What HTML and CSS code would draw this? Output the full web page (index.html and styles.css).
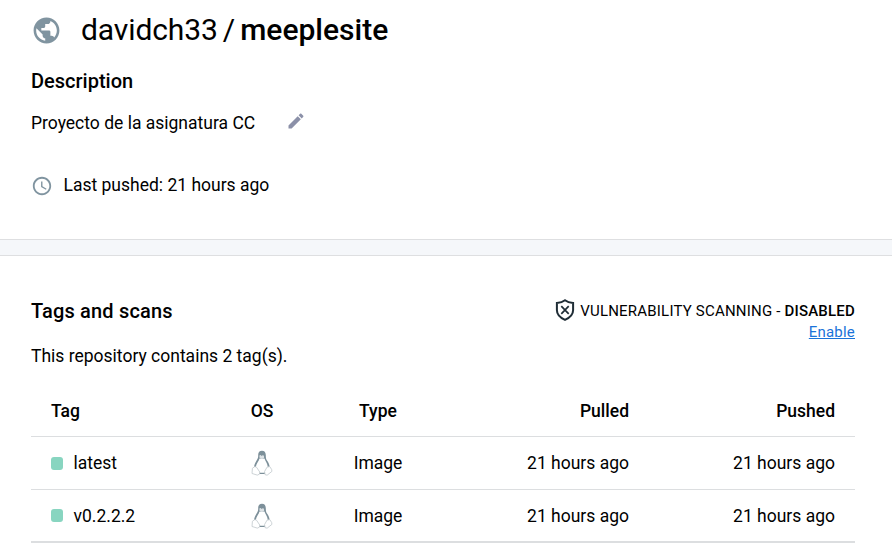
FILE: index.html
```html
<!DOCTYPE html>
<html lang="en">
<head>
<meta charset="utf-8">
<title>davidch33/meeplesite</title>
<link rel="stylesheet" href="styles.css">
</head>
<body>
<svg width="0" height="0" class="sprite">
  <symbol id="tux" viewBox="0 0 22 26">
    <path d="M11 .7C8.600.7 7.100 2.300 7.200 4.800c.1 3-.3 3.600-1.900 6.200C3.900 13.300 3 15.500 3 18l4.600 6h7l4.200-6c-.1-2.800-1.200-5.200-2.600-7.200-1.400-1.900-1.300-3.200-1.400-5.900C14.700 2.200 13.400.7 11 .7z" fill="#7d909a"/>
    <path d="M8.500 8.500c-.5 2.600-3.500 5.500-3.700 8.700l4 5.600h4.700l3.300-5.700c-.1-3.600-2.500-5.800-3.300-8.600z" fill="#fff"/>
    <path d="M8.400 5.600c.8-1 1.500-.5 2.200.3.800-.9 1.700-1 2.400-.1l.1 1.900-2.200 1.300-2.400-1.200z" fill="#dde2e5"/>
    <path d="M1.400 18.300l2.500-1.800 1.700.8 3.200 4.800-.4 2.100-2.100.9-5.300-1.600zM20.700 19.600l-1.900-3-2.700.5-2.500 4.300.4 3.200 2.100.6 4.800-3.800z" fill="#fff" stroke="#c0c8cc" stroke-width=".8"/>
  </symbol>
</svg>
<section class="overview">
  <h1 class="title">
    <svg class="globe" viewBox="0 0 24 24"><path d="M12 2C6.480 2 2 6.480 2 12s4.480 10 10 10 10-4.480 10-10S17.520 2 12 2zm-1 17.930c-3.950-.49-7-3.850-7-7.930 0-.62.08-1.210.21-1.790L9 15v1c0 1.100.9 2 2 2v1.930zm6.900-2.540c-.26-.81-1-1.390-1.900-1.390h-1v-3c0-.55-.45-1-1-1H8v-2h2c.55 0 1-.45 1-1V7h2c1.100 0 2-.9 2-2v-.41c2.930 1.190 5 4.060 5 7.410 0 2.080-.8 3.970-2.100 5.390z"/></svg>
    <span class="owner">davidch33</span><span class="slash">/</span><span class="repo">meeplesite</span>
  </h1>
  <h2 class="heading">Description</h2>
  <div class="description">
    <span>Proyecto de la asignatura CC</span>
    <svg class="pencil" viewBox="0 0 24 24"><path d="M3 17.250V21h3.750L17.810 9.940l-3.750-3.750L3 17.250zM20.710 7.040c.39-.39.39-1.020 0-1.410l-2.340-2.340c-.39-.39-1.020-.39-1.410 0l-1.830 1.830 3.750 3.750 1.830-1.830z"/></svg>
  </div>
  <div class="pushed">
    <svg class="clock" viewBox="0 0 24 24"><path d="M11.990 2C6.470 2 2 6.480 2 12s4.470 10 9.990 10C17.520 22 22 17.520 22 12S17.520 2 11.990 2zM12 20c-4.420 0-8-3.580-8-8s3.580-8 8-8 8 3.580 8 8-3.580 8-8 8zm.5-13H11v6l5.250 3.150.75-1.230-4.500-2.670z"/></svg>
    <span>Last pushed: 21 hours ago</span>
  </div>
</section>
<div class="divider"></div>
<section class="tags">
  <header class="tags-head">
    <div>
      <h2 class="heading">Tags and scans</h2>
      <p class="count">This repository contains 2 tag(s).</p>
    </div>
    <div class="scan">
      <div class="scan-status">
        <svg class="shield" viewBox="0 0 20 22"><path d="M10 1.300C7.800 3 5.200 3.700 1.900 3.900v7.300c0 4.100 3.200 7.400 8.100 9.600 4.900-2.200 8.100-5.500 8.100-9.600V3.900C14.800 3.700 12.200 3 10 1.300z"/><path class="cross" d="M6.300 7.200l7.400 7.600M13.700 7.200l-7.400 7.600"/></svg>
        <span>VULNERABILITY SCANNING - <b>DISABLED</b></span>
      </div>
      <a class="enable" href="#">Enable</a>
    </div>
  </header>
  <table class="table">
    <colgroup><col class="c1"><col class="c2"><col class="c3"><col class="c4"><col class="c5"></colgroup>
    <thead>
      <tr><th>Tag</th><th class="mid">OS</th><th class="mid">Type</th><th class="end">Pulled</th><th class="end">Pushed</th></tr>
    </thead>
    <tbody>
      <tr>
        <td><div class="tag"><i class="dot"></i>latest</div></td>
        <td class="mid"><svg class="tux"><use href="#tux"/></svg></td>
        <td class="mid">Image</td><td class="end">21 hours ago</td><td class="end">21 hours ago</td>
      </tr>
      <tr class="last">
        <td><div class="tag"><i class="dot"></i>v0.2.2.2</div></td>
        <td class="mid"><svg class="tux"><use href="#tux"/></svg></td>
        <td class="mid">Image</td><td class="end">21 hours ago</td><td class="end">21 hours ago</td>
      </tr>
    </tbody>
  </table>
</section>
</body>
</html>
```
FILE: styles.css
```css
* { box-sizing: border-box; }
body {
  margin: 0;
  background: #fff;
  color: #000;
  font: 400 17.5px/26px Roboto, sans-serif;
  white-space: nowrap;
  overflow: hidden;
}
h1, h2, p { margin: 0; }
svg { display: block; flex: none; }
.sprite { position: absolute; }
.overview { height: 239px; padding: 10px 31px 0; }
.title { display: flex; align-items: center; height: 40px; font-size: 30px; font-weight: 400; line-height: 40px; }
.globe { width: 31px; height: 31px; margin: 0 19.500px 0 -.5px; fill: #8094a0; }
.owner { letter-spacing: -.1px; }
.slash { margin: 0 5px; }
.repo { font-weight: 500; }
.heading { font-size: 20px; font-weight: 500; line-height: 26px; }
.tags .heading { letter-spacing: .17px; }
.overview .heading { margin-top: 18px; }
.description { display: flex; align-items: center; margin-top: 16px; height: 26px; }
.pencil { width: 20px; height: 20px; margin: -4px 0 0 31px; fill: #8b90a8; }
.pushed { display: flex; align-items: center; margin-top: 36px; height: 26px; }
.clock { width: 22px; height: 22px; margin: 1px 10.5px 0 0; fill: #8094a0; }
.divider { height: 17px; background: #f5f7fa; border: solid #dedfe1; border-width: 1px 0; }
.tags { padding: 42px 37px 0 31px; }
.tags-head { display: flex; justify-content: space-between; height: 88px; }
.count { margin-top: 19px; }
.scan { text-align: right; font-size: 15px; line-height: 21px; letter-spacing: .2px; }
.scan-status { display: flex; align-items: center; height: 24px; }
.scan-status span { padding-top: 2px; }
.scan-status b { font-weight: 500; }
.shield { width: 20px; height: 22px; margin-right: 5px; fill: none; stroke: #1f2d36; stroke-width: 2; }
.cross { stroke-width: 1.700; }
.enable { display: block; color: #1a73d9; text-decoration: underline; }
.table { width: 824px; table-layout: fixed; border-collapse: separate; border-spacing: 0; border-bottom: 1px solid #dcdee0; }
th, td { height: 53px; padding: 0 20px; text-align: left; border-bottom: 1px solid #dcdee0; }
th { height: 51px; font-weight: 500; }
.last td { height: 52px; }
td.mid, th.mid { text-align: center; padding: 0; }
td.end, th.end { text-align: right; }
.c1 { width: 174px; }
.c2 { width: 114px; }
.c3 { width: 118px; }
.c4 { width: 212px; }
.c5 { width: 206px; }
.tag { display: flex; align-items: center; }
.dot { width: 12px; height: 13px; margin-right: 10.5px; border-radius: 3px; background: #88d5c0; }
.tux { width: 22px; height: 26px; margin: 0 auto; }
```
